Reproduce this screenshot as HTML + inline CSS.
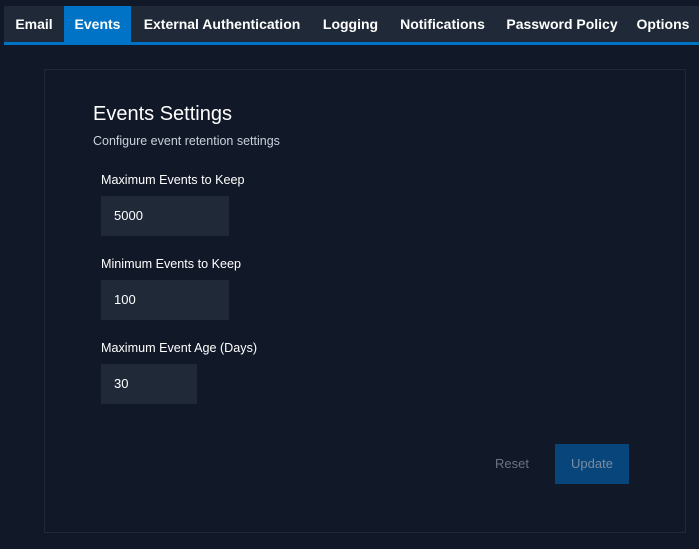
<!DOCTYPE html>
<html><head><style>
body{margin:0;width:699px;height:549px;background:#111827;font-family:"Liberation Sans",sans-serif;color:#fff;position:relative;overflow:hidden}
.tabs{position:absolute;left:4px;top:6px;width:695px;height:36px;background:#1f2937;border-bottom:3px solid #0073c7;white-space:nowrap}
.tab{position:absolute;top:0;height:36px;line-height:36px;font-weight:bold;font-size:14px;text-align:center}
.act{background:#0073c7}
.card{position:absolute;left:44px;top:69px;width:640px;height:462px;border:1px solid #1f2937}
.t{position:absolute}
.l{position:absolute;font-size:12.6px}
.in{position:absolute;background:#1f2937;height:40px;line-height:40px;padding-left:13px;box-sizing:border-box;font-size:13px}
</style></head><body>
<div class="tabs">
<div class="tab" style="left:0;width:60px">Email</div>
<div class="tab act" style="left:60px;width:67px">Events</div>
<div class="tab" style="left:127px;width:182px">External Authentication</div>
<div class="tab" style="left:309px;width:75px">Logging</div>
<div class="tab" style="left:384px;width:109px">Notifications</div>
<div class="tab" style="left:493px;width:130px">Password Policy</div>
<div class="tab" style="left:623px;width:72px">Options</div>
</div>
<div class="card"></div>
<div class="t" style="left:93px;top:103px;font-size:20px">Events Settings</div>
<div class="t" style="left:93px;top:134px;font-size:12.5px;color:#c9d1dc">Configure event retention settings</div>
<div class="l" style="left:101px;top:173px">Maximum Events to Keep</div>
<div class="in" style="left:101px;top:196px;width:128px">5000</div>
<div class="l" style="left:101px;top:257px">Minimum Events to Keep</div>
<div class="in" style="left:101px;top:280px;width:128px">100</div>
<div class="l" style="left:101px;top:341px">Maximum Event Age (Days)</div>
<div class="in" style="left:101px;top:364px;width:96px">30</div>
<div class="t" style="left:495px;top:456px;font-size:13px;color:#6b7280">Reset</div>
<div class="t" style="left:555px;top:444px;width:74px;height:40px;line-height:40px;text-align:center;background:#07457a;color:#7c8ba0;font-size:13px">Update</div>
</body></html>
